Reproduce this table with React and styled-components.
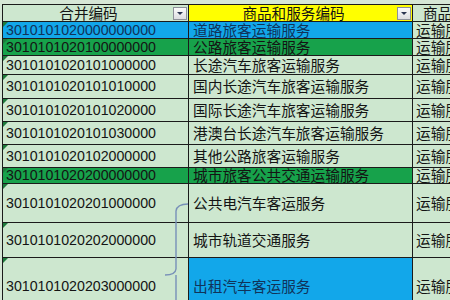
import React from "react";
import styled, { createGlobalStyle } from "styled-components";

const Global = createGlobalStyle`
  html, body { margin: 0; padding: 0; background: #d6e7d6; overflow: hidden; }
  body { width: 450px; height: 300px; font-family: "Liberation Sans", "Noto Sans CJK SC", sans-serif; }
`;

const Page = styled.div`
  width: 450px;
  height: 300px;
  overflow: hidden;
  padding-top: 4px;
  padding-left: 2px;
  box-sizing: border-box;
  background: #d6e7d6;
`;

const Sheet = styled.div`
  position: relative;
  display: grid;
  grid-template-columns: 186px 224px 1fr;
  border-left: 1px solid #1b1b1b;
  border-top: 1px solid #1b1b1b;
  width: 460px;
`;

const bgs = {
  plain: "#cde7cf",
  blue: "#12a7ea",
  green: "#17a24b",
  yellow: "#ffff00",
};

const Cell = styled.div`
  position: relative;
  height: ${(p) => p.$h}px;
  box-sizing: border-box;
  border-right: 1px solid #1b1b1b;
  border-bottom: 1px solid #1b1b1b;
  background: ${(p) => bgs[p.$bg || "plain"]};
  display: flex;
  align-items: center;
  padding-left: ${(p) => p.$pl ?? 3}px;
  color: #141414;
  white-space: nowrap;
`;

const CodeText = styled.span`
  display: block;
  font-family: "Liberation Sans", "Noto Sans CJK SC", sans-serif;
  font-size: 14.2px;
  line-height: 1;
  color: ${(p) => (p.$dark ? "#10335a" : "#141414")};
`;

const NameText = styled.span`
  display: block;
  font-family: "Noto Sans CJK SC", sans-serif;
  font-size: 14.7px;
  line-height: 1;
  color: ${(p) => (p.$dark ? "#10335a" : "#141414")};
`;

const HeadCell = styled(Cell)`
  justify-content: ${(p) => (p.$left ? "flex-start" : "center")};
  padding-left: ${(p) => (p.$left ? 10 : 0)}px;
  padding-right: ${(p) => (p.$left ? 0 : 14)}px;
`;

const HeadText = styled.span`
  display: block;
  font-family: "Noto Sans CJK SC", sans-serif;
  font-size: 14.6px;
  line-height: 1;
  color: #141414;
`;

const Filter = styled.div`
  position: absolute;
  right: 1px;
  top: 2px;
  width: 14px;
  height: 13px;
  box-sizing: border-box;
  border: 1px solid #8d9199;
  background: linear-gradient(#fbfbfb, #dcdde0);
  display: flex;
  align-items: center;
  justify-content: center;
  &::after {
    content: "";
    border-left: 3px solid transparent;
    border-right: 3px solid transparent;
    border-top: 3px solid #2a3550;
  }
`;

const Flag = styled.div`
  position: absolute;
  left: 0;
  top: 0;
  width: 0;
  height: 0;
  border-top: 5px solid #1e7a3c;
  border-right: 5px solid transparent;
`;

const Brace = styled.svg`
  position: absolute;
  left: 155px;
  top: 190px;
  pointer-events: none;
`;

const rows = [
  { code: "3010101020000000000", name: "道路旅客运输服务", h: 17, bg: "blue" },
  { code: "3010101020100000000", name: "公路旅客运输服务", h: 17, bg: "green" },
  { code: "3010101020101000000", name: "长途汽车旅客运输服务", h: 19 },
  { code: "3010101020101010000", name: "国内长途汽车旅客运输服务", h: 24 },
  { code: "3010101020101020000", name: "国际长途汽车旅客运输服务", h: 23 },
  { code: "3010101020101030000", name: "港澳台长途汽车旅客运输服务", h: 23 },
  { code: "3010101020102000000", name: "其他公路旅客运输服务", h: 23 },
  { code: "3010101020200000000", name: "城市旅客公共交通运输服务", h: 16, bg: "green" },
  { code: "3010101020201000000", name: "公共电汽车客运服务", h: 39 },
  { code: "3010101020202000000", name: "城市轨道交通服务", h: 35 },
  { code: "3010101020203000000", name: "出租汽车客运服务", h: 58, nameBg: "blue" },
];

export default function App() {
  return (
    <>
      <Global />
      <Page>
        <Sheet>
          <HeadCell $h={17}>
            <HeadText>合并编码</HeadText>
            <Filter />
          </HeadCell>
          <HeadCell $h={17} $bg="yellow">
            <HeadText>商品和服务编码</HeadText>
            <Filter />
          </HeadCell>
          <HeadCell $h={17} $left>
            <HeadText>商品和服务名称</HeadText>
          </HeadCell>
          {rows.map((r) => (
            <React.Fragment key={r.code}>
              <Cell $h={r.h} $bg={r.bg} $pl={3}>
                <Flag />
                <CodeText $dark={r.bg === "blue"}>{r.code}</CodeText>
              </Cell>
              <Cell $h={r.h} $bg={r.nameBg || r.bg} $pl={4}>
                <NameText $dark={(r.nameBg || r.bg) === "blue"}>{r.name}</NameText>
              </Cell>
              <Cell $h={r.h} $pl={3}>
                <NameText>运输服务</NameText>
              </Cell>
            </React.Fragment>
          ))}
          <Brace width="40" height="120" viewBox="0 0 40 120">
            <path
              d="M30 9 Q19 9 18 16 L18 74 Q17.5 80 7 80 M18 80 L18 120"
              fill="none"
              stroke="#7890b8"
              strokeWidth="1.4"
            />
          </Brace>
        </Sheet>
      </Page>
    </>
  );
}
